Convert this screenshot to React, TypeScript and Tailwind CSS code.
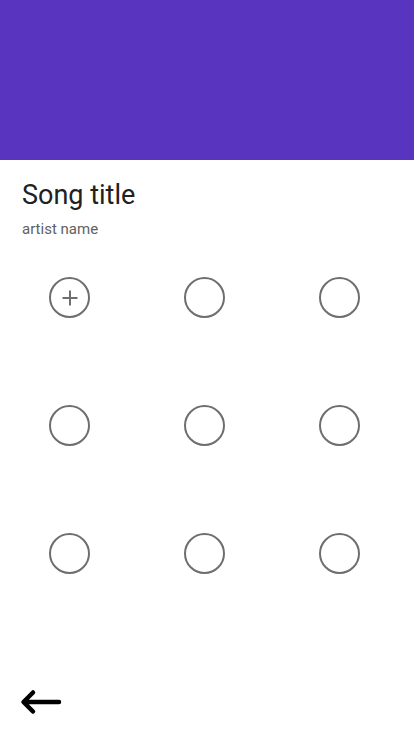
import React from "react";

function Circle({ plus }: { plus?: boolean }) {
  return (
    <div className="w-[41px] h-[41px] rounded-full border-2 border-[#6e6e6e] flex items-center justify-center">
      {plus && (
        <svg width="20" height="20" viewBox="0 0 20 20">
          <path d="M10 2.5v15M2.5 10h15" stroke="#6e6e6e" strokeWidth="2" fill="none" />
        </svg>
      )}
    </div>
  );
}

export default function App() {
  const cells = Array.from({ length: 9 }, (_, i) => i);
  return (
    <div className="w-[414px] h-[736px] bg-white flex flex-col relative" style={{ fontFamily: "Roboto, sans-serif" }}>
      <div className="h-[160px] bg-[#5935bf] shrink-0" />
      <div className="pl-[22px] pt-[19px]">
        <div className="text-[27px] leading-[32px] text-[#212121]">Song title</div>
        <div className="text-[15px] leading-[18px] text-[#616161] mt-[9px]">artist name</div>
      </div>
      <div className="grid grid-cols-[135px_135px_135px] auto-rows-[128px] pl-[2px] mt-[39px]">
        {cells.map((i) => (
          <div key={i} className="flex justify-center">
            <Circle plus={i === 0} />
          </div>
        ))}
      </div>
      <div className="mt-auto pl-[20px] pb-[20px]">
        <svg width="42" height="28" viewBox="0 0 42 28">
          <path d="M4 14h35M13 4.5L3.5 14l9.5 9.5" stroke="#000" strokeWidth="4.5" fill="none" strokeLinecap="round" strokeLinejoin="round" />
        </svg>
      </div>
    </div>
  );
}
